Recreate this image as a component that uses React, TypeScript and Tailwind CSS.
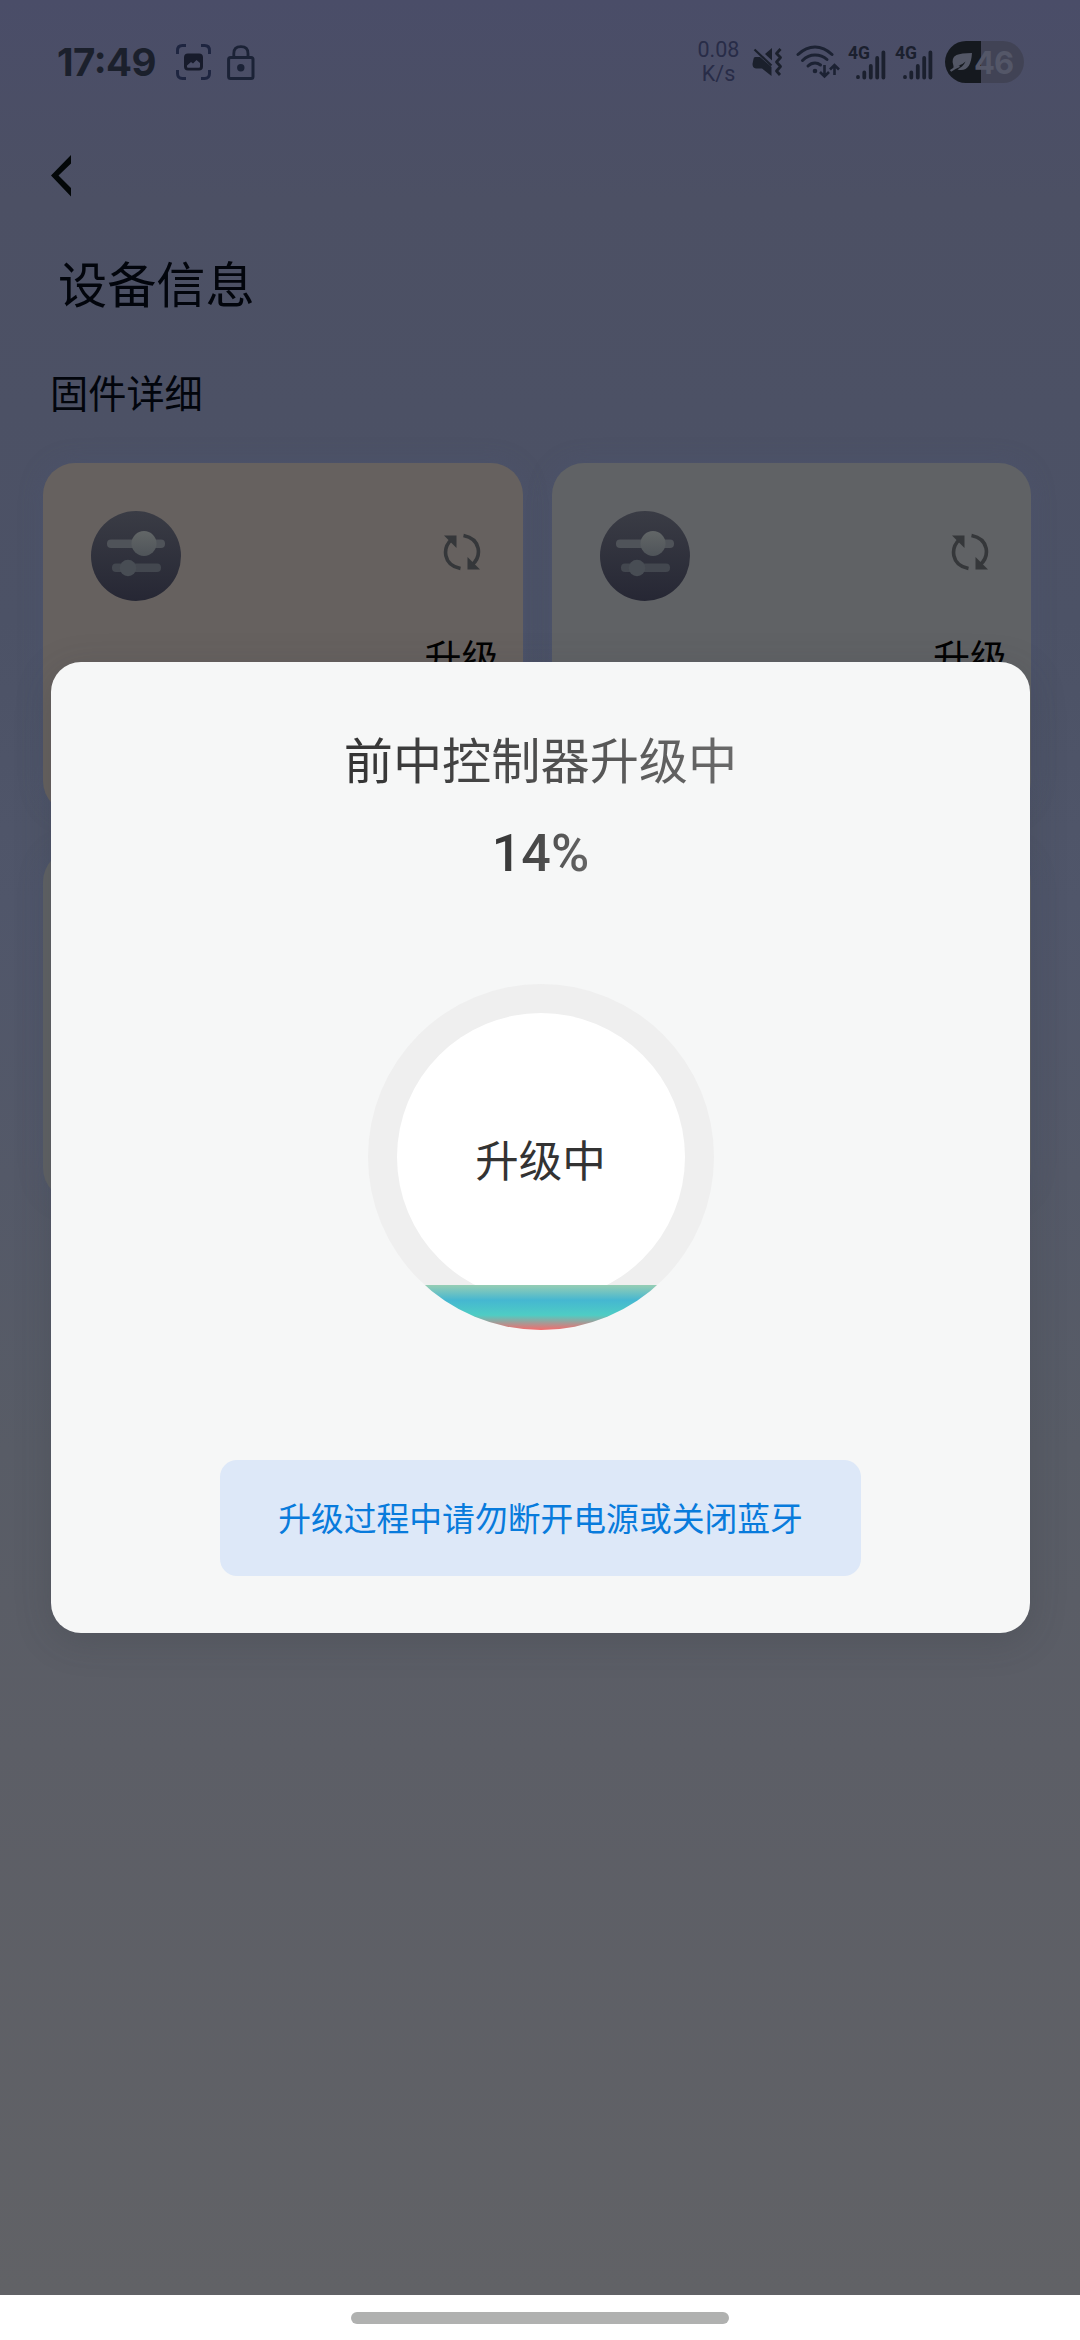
const ScanIcon = () => (
	<svg className="w-[35px] h-[36px]" viewBox="0 0 35 36" fill="none">
		<path
			d="M1.500 10V6.500Q1.500 1.500 6.500 1.500H10M25 1.500H28.500Q33.500 1.500 33.500 6.500V10M33.500 26V29.500Q33.500 34.500 28.500 34.500H25M10 34.500H6.500Q1.500 34.500 1.500 29.500V26"
			stroke="#1e2540"
			strokeWidth="2.900"
		/>
		<path
			fillRule="evenodd"
			d="M12 9.500H23Q27 9.500 27 13.500V22.500Q27 26.500 23 26.500H12Q8 26.500 8 22.500V13.500Q8 9.500 12 9.500ZM11 22.800Q11 23.800 12 23.800H23Q24 23.800 24 22.800V19L20.500 16L17 19.500L15 18L11 21.500Z"
			fill="#171b2b"
		/>
	</svg>
);

const LockIcon = () => (
	<svg className="w-[28px] h-[35px]" viewBox="0 0 28 35" fill="none">
		<rect
			x="1.600"
			y="12.600"
			width="24.400"
			height="20.800"
			rx="2"
			stroke="#1b2236"
			strokeWidth="3"
		/>
		<path
			d="M6.800 12V8.500Q6.800 1.700 13.900 1.700Q21 1.700 21 8.500V12"
			stroke="#1b2236"
			strokeWidth="2.800"
		/>
		<circle cx="13.800" cy="22.800" r="3.700" fill="#1b2236" />
	</svg>
);

const MuteIcon = () => (
	<svg className="w-[31px] h-[30px]" viewBox="0 0 31 30" fill="none">
		<path
			d="M1.500 12Q1.500 10 3.500 10H8L19.500 20V29L10 21.500H4Q0.500 21 0.500 17Z"
			fill="#1b202c"
		/>
		<path d="M13 7L20 1V13.500Z" fill="#1b202c" />
		<path d="M2.500 2.500L19.500 18.500" stroke="#1b202c" strokeWidth="2.200" />
		<path
			d="M28.500 2L24.500 6.500L28.500 10.500L24.500 15L28.500 19.500L24.500 24L28 28"
			stroke="#1b202c"
			strokeWidth="2.800"
			strokeLinejoin="round"
		/>
	</svg>
);

const WifiIcon = () => (
	<svg className="w-[44px] h-[34px]" viewBox="0 0 44 34" fill="none">
		<g stroke="#1c2233" strokeWidth="3" strokeLinecap="round">
			<path d="M2 9.500Q10 2 19 2Q28 2 36 9.500" />
			<path d="M6.500 15.500Q12 10 19 10Q26 10 31 14.500" />
			<path d="M12 21Q15 18 19 18Q22 18 24.500 20" />
		</g>
		<circle cx="19" cy="26" r="2.300" fill="#1c2233" />
		<path
			d="M28.500 20V31M24 27L28.500 31.500L33 27M38.500 30V20M34 24.500L38.500 20L43 24.500"
			stroke="#1c2233"
			strokeWidth="2.600"
		/>
	</svg>
);

const SignalIcon = () => (
	<div className="relative w-[38px] h-[34px] shrink-0">
		<span className="absolute left-0 top-0 text-[17.5px] leading-[14px] font-bold font-[Roboto,sans-serif] text-[#1b202e]">
			4G
		</span>
		<svg
			className="absolute left-[8px] top-[4px] w-[30px] h-[30px]"
			viewBox="0 0 30 30"
			stroke="#1b202e"
			strokeWidth="3.800"
			strokeLinecap="round"
		>
			<path d="M2 27v.2M8.300 22.500v5M14.800 16v11.500M21.200 8v19.500M27.400 2.500v25" />
		</svg>
	</div>
);

const LeafIcon = () => (
	<svg className="w-[23px] h-[20px]" viewBox="0 0 23 20" fill="none">
		<path
			d="M3.500 14Q0.500 6 6.500 3Q11 1 22 1Q21.500 9 19 13.500Q15 19.500 7.500 17.500L12 14.500Q14.500 12 15.500 9.500Q13 12 10 13Q6 14.500 3.500 16.500Z"
			fill="#535766"
		/>
		<path d="M0.500 19Q5 15.500 9.500 14" stroke="#535766" strokeWidth="2.200" />
	</svg>
);

const StatusBar = () => (
	<div className="h-[84px] pt-[41px] pl-[57px] pr-[56px] flex items-start justify-between">
		<div className="h-[42px] flex items-center">
			<span className="w-[119px] text-[38.5px] leading-[42px] font-bold tracking-[-0.5px] font-[Inter,sans-serif] text-[#1b202c]">
				17
				<span className="relative -top-[3px]">:</span>
				49
			</span>
			<ScanIcon />
			<div className="w-[16px]" />
			<LockIcon />
		</div>
		<div className="h-[42px] flex items-center">
			<div className="w-[43px] mr-[12px] text-center text-[21.5px] leading-[24px] font-[Roboto,sans-serif] text-[#282c47]">
				<div>0.08</div>
				<div>K/s</div>
			</div>
			<MuteIcon />
			<div className="ml-[13px]">
				<WifiIcon />
			</div>
			<div className="flex gap-[9px] ml-[8px] mr-[12px] mt-[2px]">
				<SignalIcon />
				<SignalIcon />
			</div>
			<div className="w-[79px] h-[42px] rounded-full flex items-center pl-[5px] bg-linear-to-r from-[#15191f] from-[46%] to-[#414355] to-[46%]">
				<LeafIcon />
				<span className="ml-[1px] text-[31px] leading-none font-bold font-[Inter,sans-serif] tracking-[-1px] text-[#545768]">
					46
				</span>
			</div>
		</div>
	</div>
);

const ControllerIcon = () => (
	<svg className="w-[90px] h-[90px]" viewBox="0 0 90 90">
		<defs>
			<linearGradient id="disc" x1="0" y1="0" x2="0" y2="1">
				<stop offset="0" stopColor="#3a3c45" />
				<stop offset="1" stopColor="#262734" />
			</linearGradient>
			<linearGradient id="knob" x1="0" y1="0" x2="0" y2="1">
				<stop offset="0" stopColor="#626667" />
				<stop offset="1" stopColor="#4f5459" />
			</linearGradient>
		</defs>
		<circle cx="45" cy="45" r="45" fill="url(#disc)" />
		<rect x="16" y="28.500" width="58" height="8.500" rx="4" fill="#4f5359" />
		<circle cx="53" cy="32.500" r="12.500" fill="url(#knob)" />
		<rect x="21" y="52.500" width="49" height="8.500" rx="4" fill="#43474f" />
		<circle cx="37" cy="57" r="8.300" fill="#484d54" />
	</svg>
);

const RefreshIcon = () => (
	<svg className="w-[38px] h-[38px]" viewBox="0 0 38 38" fill="none">
		<g stroke="#35373a" strokeWidth="3.600">
			<path d="M9 6C-1 15 0 32 17.500 35.500" />
			<path d="M20.500 2.500C38 6 39 23 29 32" />
		</g>
		<path d="M1 2.500H13.500V15Z" fill="#35373a" />
		<path d="M37 36.500H24.500V24Z" fill="#35373a" />
	</svg>
);

const DeviceCard = ({ warm = false }: { warm?: boolean }) => (
	<div
		className={`h-[350px] rounded-[32px] pt-[48px] pl-[48px] pr-[24px] shadow-[0_0_24px_rgba(76,86,120,0.3)] ${
			warm ? "bg-[#66615f]" : "bg-[#606265]"
		}`}
	>
		<div className="flex items-start justify-between pr-[18px]">
			<ControllerIcon />
			<div className="pt-[22px]">
				<RefreshIcon />
			</div>
		</div>
		<p className="mt-[27px] text-right text-[37px] leading-[56px] text-black">
			升级
		</p>
	</div>
);

const UpgradeDialog = () => (
	<div className="absolute left-[51px] top-[662px] w-[979px] h-[971px] rounded-[30px] bg-[#f6f7f7] shadow-[0_8px_36px_rgba(50,55,60,0.22)] flex flex-col items-center">
		<h2 className="mt-[60px] text-[49.2px] leading-[72px] bg-linear-to-r from-[#333333] to-[#6a6a6a] bg-clip-text text-transparent">
			前中控制器升级中
		</h2>
		<div className="mt-[29px] text-[52px] leading-[61px] font-medium font-[Roboto,sans-serif] bg-linear-to-r from-[#333333] to-[#666666] bg-clip-text text-transparent">
			14%
		</div>
		<div className="relative mt-[100px] size-[346px] shrink-0 rounded-full overflow-hidden bg-[#efefef] flex items-center justify-center">
			<div className="size-[288px] rounded-full bg-white flex items-center justify-center pt-[4px] text-[43.5px] text-[#333333]">
				升级中
			</div>
			<div className="absolute left-0 bottom-0 w-full h-[45px] bg-[linear-gradient(to_top,#f56c6c_0%,#4ecdc4_33%,#45b7d1_66%,#96ceb4_100%)]" />
		</div>
		<div className="mt-[130px] w-[641px] h-[116px] rounded-[17px] bg-[#dde8f8] flex items-center justify-center pb-[2px] text-[32.8px] text-[#087bdc]">
			升级过程中请勿断开电源或关闭蓝牙
		</div>
	</div>
);

const App = () => {
	return (
		<div className="relative w-[1080px] h-[2340px] overflow-hidden flex flex-col bg-white font-['Noto_Sans_CJK_SC',sans-serif]">
			<main className="h-[2295px] shrink-0 bg-[linear-gradient(to_bottom,#4a4d68_0px,#4c5064_200px,#4c5266_620px,#50566a_900px,#585c66_1450px,#5c5e66_1750px,#616266_2295px)]">
				<StatusBar />
				<div className="h-[150px] pt-[71px] pl-[51px]">
					<svg className="w-[20px] h-[42px]" viewBox="0 0 20 42">
						<path d="M20 0V8.500L7.500 20.500L20 33V41.500L0 20.500Z" fill="#030708" />
					</svg>
				</div>
				<h1 className="pl-[58px] text-[49.2px] leading-[96px] text-[#02050c]">
					设备信息
				</h1>
				<h2 className="pl-[50px] mt-[34px] text-[38.2px] leading-[56px] text-[#02050c]">
					固件详细
				</h2>
				<div className="mt-[43px] pl-[43px] pr-[49px] grid grid-cols-2 gap-x-[29px] gap-y-[37px]">
					<DeviceCard warm />
					<DeviceCard />
					<DeviceCard />
					<DeviceCard />
				</div>
			</main>
			{/* System gesture bar */}
			<div className="flex-1 pt-[17px] flex justify-center items-start">
				<div className="w-[378px] h-[12px] rounded-full bg-[#b0b1b0]" />
			</div>
			<UpgradeDialog />
		</div>
	);
};

export default App;
